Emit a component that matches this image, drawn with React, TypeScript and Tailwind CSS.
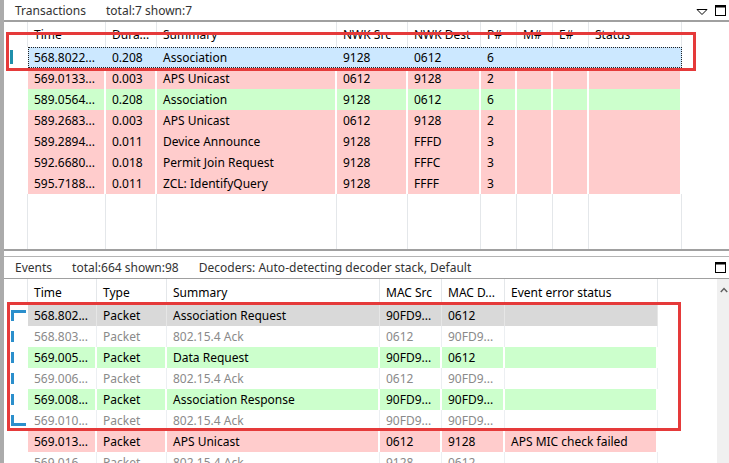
import React from 'react'

type Tone = 'sel' | 'pink' | 'green' | 'white' | 'gray'

interface Col {
  label: string
  w: string
}

// column widths measured off the screenshot
const txCols: Col[] = [
  { label: 'Time', w: 'w-[78px]' },
  { label: 'Dura...', w: 'w-[51px]' },
  { label: 'Summary', w: 'w-[180px]' },
  { label: 'NWK Src', w: 'w-[71px]' },
  { label: 'NWK Dest', w: 'w-[73px]' },
  { label: 'P#', w: 'w-[36px]' },
  { label: 'M#', w: 'w-[36px]' },
  { label: 'E#', w: 'w-[36px]' },
  { label: 'Status', w: 'w-[93px]' },
]

const evCols: Col[] = [
  { label: 'Time', w: 'w-[69px]' },
  { label: 'Type', w: 'w-[70px]' },
  { label: 'Summary', w: 'w-[213px]' },
  { label: 'MAC Src', w: 'w-[62px]' },
  { label: 'MAC D...', w: 'w-[63px]' },
  { label: 'Event error status', w: 'w-[153px]' },
]

const transactions: { tone: Tone; cells: string[] }[] = [
  { tone: 'sel', cells: ['568.8022...', '0.208', 'Association', '9128', '0612', '6', '', '', ''] },
  { tone: 'pink', cells: ['569.0133...', '0.003', 'APS Unicast', '0612', '9128', '2', '', '', ''] },
  { tone: 'green', cells: ['589.0564...', '0.208', 'Association', '9128', '0612', '6', '', '', ''] },
  { tone: 'pink', cells: ['589.2683...', '0.003', 'APS Unicast', '0612', '9128', '2', '', '', ''] },
  { tone: 'pink', cells: ['589.2894...', '0.011', 'Device Announce', '9128', 'FFFD', '3', '', '', ''] },
  { tone: 'pink', cells: ['592.6680...', '0.018', 'Permit Join Request', '9128', 'FFFC', '3', '', '', ''] },
  { tone: 'pink', cells: ['595.7188...', '0.011', 'ZCL: IdentifyQuery', '9128', 'FFFF', '3', '', '', ''] },
]

type Mark = 'top' | 'mid' | 'end' | null

const events: { tone: Tone; mark: Mark; cells: string[] }[] = [
  { tone: 'gray', mark: 'top', cells: ['568.802...', 'Packet', 'Association Request', '90FD9...', '0612', ''] },
  { tone: 'white', mark: 'mid', cells: ['568.803...', 'Packet', '802.15.4 Ack', '0612', '90FD9...', ''] },
  { tone: 'green', mark: 'mid', cells: ['569.005...', 'Packet', 'Data Request', '90FD9...', '0612', ''] },
  { tone: 'white', mark: 'mid', cells: ['569.006...', 'Packet', '802.15.4 Ack', '0612', '90FD9...', ''] },
  { tone: 'green', mark: 'mid', cells: ['569.008...', 'Packet', 'Association Response', '90FD9...', '90FD9...', ''] },
  { tone: 'white', mark: 'end', cells: ['569.010...', 'Packet', '802.15.4 Ack', '90FD9...', '90FD9...', ''] },
  { tone: 'pink', mark: null, cells: ['569.013...', 'Packet', 'APS Unicast', '0612', '9128', 'APS MIC check failed'] },
  { tone: 'white', mark: null, cells: ['569.016...', 'Packet', '802.15.4 Ack', '9128', '0612', ''] },
]

const toneCell: Record<Tone, string> = {
  sel: 'bg-[#cce8ff] text-black',
  pink: 'bg-[#ffcccc] text-black border-r-2 border-white',
  green: 'bg-[#ccffcc] text-black border-r-2 border-white',
  gray: 'bg-[#d9d9d9] text-black border-r border-[#e6e6e6]',
  white: 'bg-white text-[#8a8a8a] border-r border-[#eceff2]',
}

const RestoreIcon = () => (
  <svg width="11" height="11" viewBox="0 0 11 11" className="block">
    <rect x="0.5" y="0.5" width="10" height="10" fill="none" stroke="#000" />
    <rect x="0.5" y="0.5" width="10" height="2" fill="#000" />
  </svg>
)

const TitleBar = ({ items, dropdown, h }: { items: string[]; dropdown?: boolean; h: string }) => (
  <div className={`flex items-center ${h} pl-[11px] pr-[3px] text-[#333] shrink-0`}>
    <div className="flex gap-[20px] flex-1 whitespace-nowrap">
      {items.map(t => (
        <span key={t}>{t}</span>
      ))}
    </div>
    {dropdown && (
      <svg width="12" height="8" viewBox="0 0 12 8" className="mr-[7px] mt-[3px]">
        <path d="M1 1.5 L11 1.5 L6 6.5 Z" fill="none" stroke="#000" />
      </svg>
    )}
    <RestoreIcon />
  </div>
)

const HeaderRow = ({ cols, h }: { cols: Col[]; h: string }) => (
  <div className={`flex shrink-0 ${h}`}>
    <div className="w-[24px] shrink-0 border-r border-[#e4e7ea]" />
    {cols.map(c => (
      <div key={c.label} className={`${c.w} shrink-0 pl-[6px] flex items-center border-r border-[#e4e7ea] whitespace-nowrap overflow-hidden text-black`}>
        {c.label}
      </div>
    ))}
  </div>
)

const Filler = ({ cols }: { cols: Col[] }) => (
  <div className="flex flex-1">
    <div className="w-[24px] shrink-0 border-r border-[#e4e7ea]" />
    {cols.map(c => (
      <div key={c.label} className={`${c.w} shrink-0 border-r border-[#e4e7ea]`} />
    ))}
  </div>
)

const Marker = ({ mark }: { mark: Mark }) => {
  if (!mark) return null
  return (
    <div className="relative w-[24px] h-[21px]">
      <div className="absolute left-[7px] top-[5px] w-[3px] h-[11px] bg-[#2b8fcc]" />
      {mark === 'top' && <div className="absolute left-[7px] top-[5px] w-[15px] h-[3px] bg-[#2b8fcc]" />}
      {mark === 'end' && <div className="absolute left-[7px] top-[13px] w-[15px] h-[3px] bg-[#2b8fcc]" />}
    </div>
  )
}

export default function App() {
  return (
    <div className="relative w-[729px] h-[463px] overflow-hidden bg-white flex font-['Noto_Sans',sans-serif] text-[12px] leading-[21px]">
      <div className="w-[4px] shrink-0 bg-[#ababab]" />

      <div className="flex-1 flex flex-col min-w-0">
        {/* Transactions panel */}
        <div className="h-[249px] flex flex-col shrink-0">
          <TitleBar items={['Transactions', 'total:7 shown:7']} dropdown h="h-[20px]" />
          <div className="h-[2px] bg-[#a0a0a0] shrink-0" />
          <HeaderRow cols={txCols} h="h-[25px]" />
          {transactions.map((row, i) => (
            <div key={i} className="relative flex h-[21px] shrink-0">
              <div className="w-[24px] shrink-0 relative">
                {row.tone === 'sel' && <div className="absolute left-[6px] top-[3px] w-[3px] h-[14px] bg-[#1f8fab]" />}
              </div>
              {row.cells.map((c, j) => (
                <div key={j} className={`${txCols[j].w} shrink-0 pl-[6px] whitespace-nowrap overflow-hidden ${toneCell[row.tone]}`}>
                  {c}
                </div>
              ))}
              {row.tone === 'sel' && (
                <div className="absolute top-0 left-[24px] w-[654px] h-[21px] border border-dotted border-[#222]" />
              )}
            </div>
          ))}
          <Filler cols={txCols} />
        </div>

        {/* splitter */}
        <div className="h-[2px] bg-[#a0a0a0] shrink-0" />
        <div className="h-[5px] bg-white shrink-0" />
        <div className="h-[1px] bg-[#b4b4b4] shrink-0" />

        {/* Events panel */}
        <TitleBar items={['Events', 'total:664 shown:98', 'Decoders: Auto-detecting decoder stack, Default']} h="h-[21px]" />
        <div className="h-[1px] bg-[#a0a0a0] shrink-0" />
        <div className="flex flex-1 min-h-0">
          <div className="flex-1 flex flex-col min-w-0">
            <HeaderRow cols={evCols} h="h-[26px]" />
            {events.map((row, i) => (
              <div key={i} className="flex h-[21px] shrink-0">
                <div className="w-[24px] shrink-0">
                  <Marker mark={row.mark} />
                </div>
                {row.cells.map((c, j) => (
                  <div key={j} className={`${evCols[j].w} shrink-0 pl-[6px] whitespace-nowrap overflow-hidden ${toneCell[row.tone]}`}>
                    {c}
                  </div>
                ))}
              </div>
            ))}
          </div>
          <div className="w-[12px] shrink-0 bg-[#f0f0f0] pt-[8px] pl-[3px]">
            <svg width="8" height="6" viewBox="0 0 8 6">
              <path d="M0.8 5 L4 1.6 L7.2 5" fill="none" stroke="#606060" strokeWidth="1.5" />
            </svg>
          </div>
        </div>
      </div>

      {/* red annotation frames */}
      <div className="absolute left-[6px] top-[32px] w-[690px] h-[39px] border-[3px] border-[#e53a3a]" />
      <div className="absolute left-[7px] top-[302px] w-[674px] h-[129px] border-[3px] border-[#e53a3a]" />
    </div>
  )
}
